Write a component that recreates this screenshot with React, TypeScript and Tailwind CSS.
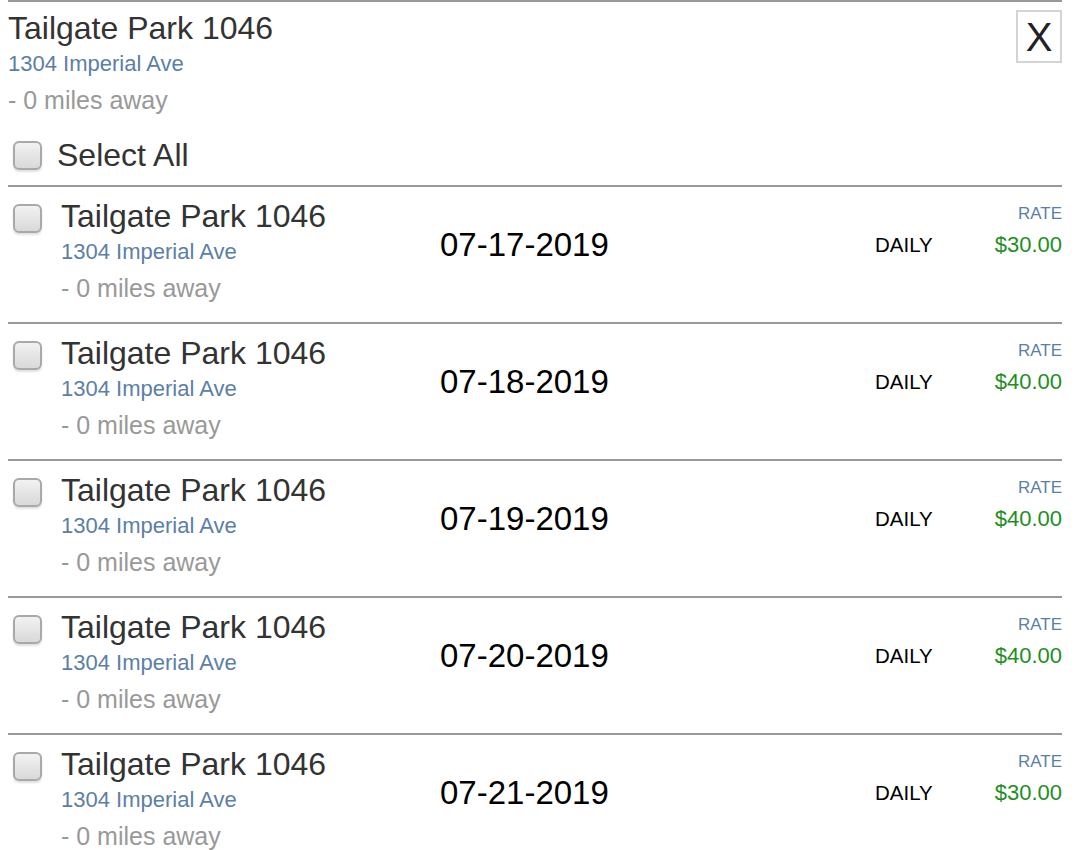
const rows = [
  { date: '07-17-2019', price: '$30.00' },
  { date: '07-18-2019', price: '$40.00' },
  { date: '07-19-2019', price: '$40.00' },
  { date: '07-20-2019', price: '$40.00' },
  { date: '07-21-2019', price: '$30.00' },
];

const Box = () => (
  <div className="w-[29px] h-[29px] shrink-0 rounded-[6px] border-2 border-[#a9a9a9] bg-linear-to-b from-[#f2f2f2] to-[#d9d9d9] shadow-[0_2px_2px_rgba(0,0,0,0.12)]" />
);

const Place = () => (
  <div>
    <div className="text-[32px] leading-[36px] text-[#333]">Tailgate Park 1046</div>
    <div className="text-[22px] leading-[36px] text-[#5b80a6]">1304 Imperial Ave</div>
    <div className="text-[25px] leading-[36px] text-[#999]">- 0 miles away</div>
  </div>
);

const App = () => {
  return (
    <div className="font-['Liberation_Sans',Helvetica,Arial,sans-serif] bg-white min-h-[850px]">
      <div className="ml-2 w-[1054px] border-t-2 border-[#999]">
        <div className="pt-2 pb-[12px]">
          <div className="flex justify-between items-start">
            <Place />
            <button className="w-[46px] h-[53px] border-2 border-[#d4d4d4] text-[40px] leading-none text-[#222] flex items-center justify-center">
              X
            </button>
          </div>
          <div className="mt-[19px] flex items-center gap-[15px] pl-[5px] h-[36px]">
            <Box />
            <span className="text-[32px] text-[#333]">Select All</span>
          </div>
        </div>

        {rows.map((r) => (
          <div key={r.date} className="flex border-t-2 border-[#999] pt-[11px] pb-[16px]">
            <div className="w-[432px] flex items-start gap-[19px] pl-[5px]">
              <div className="mt-[6px]">
                <Box />
              </div>
              <Place />
            </div>
            <div className="flex-1 mt-[29px] text-[33px] leading-[36px] text-black">{r.date}</div>
            <div className="w-[67px] mt-[29px] text-[20.5px] leading-[36px] text-black">DAILY</div>
            <div className="w-[120px] text-right">
              <div className="mt-[6px] text-[17px] leading-[20px] text-[#5b80a6]">RATE</div>
              <div className="mt-[6px] text-[22px] leading-[30px] text-[#1e8f1e]">{r.price}</div>
            </div>
          </div>
        ))}
      </div>
    </div>
  );
};

export default App;
